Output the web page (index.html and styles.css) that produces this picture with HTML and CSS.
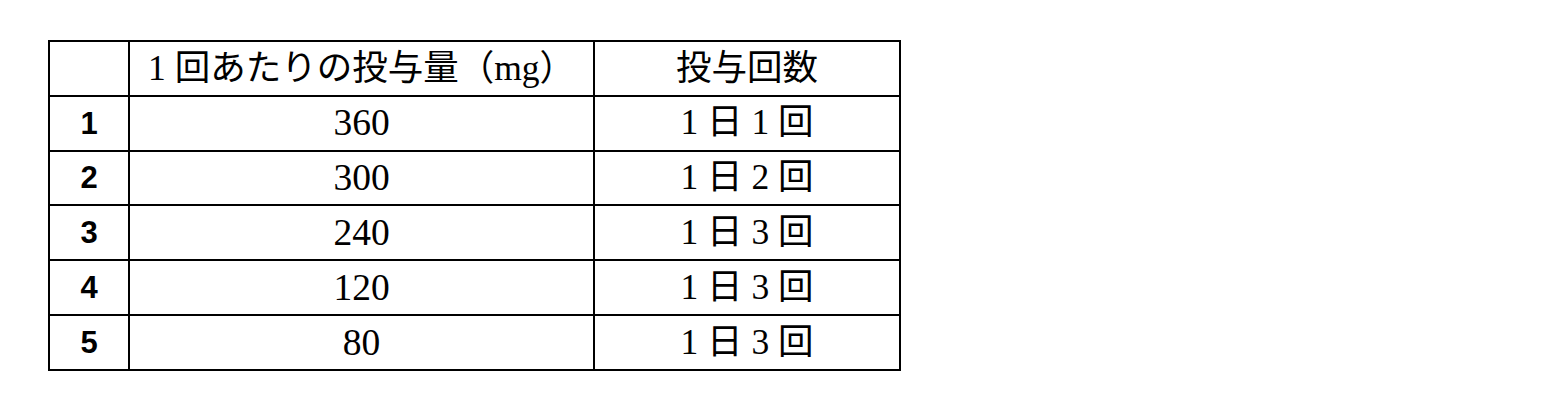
FILE: index.html
```html
<!DOCTYPE html>
<html lang="ja">
<head>
<meta charset="utf-8">
<link rel="stylesheet" href="styles.css">
</head>
<body>
<div class="page">
  <table class="dose">
    <colgroup>
      <col class="c-no">
      <col class="c-amt">
      <col class="c-freq">
    </colgroup>
    <thead>
      <tr>
        <th></th>
        <th>1 回あたりの投与量（mg）</th>
        <th>投与回数</th>
      </tr>
    </thead>
    <tbody>
      <tr><td class="no">1</td><td class="num">360</td><td>1 日 1 回</td></tr>
      <tr><td class="no">2</td><td class="num">300</td><td>1 日 2 回</td></tr>
      <tr><td class="no">3</td><td class="num">240</td><td>1 日 3 回</td></tr>
      <tr><td class="no">4</td><td class="num">120</td><td>1 日 3 回</td></tr>
      <tr><td class="no">5</td><td class="num">80</td><td>1 日 3 回</td></tr>
    </tbody>
  </table>
</div>
</body>
</html>
```
FILE: styles.css
```css
html, body {
  margin: 0;
  padding: 0;
  background: #fff;
}
.page {
  padding: 40px 0 0 48px;
}
.dose {
  border-collapse: collapse;
  table-layout: fixed;
  width: 851px;
  font-family: "Liberation Serif", "Noto Sans CJK JP", serif;
  font-size: 35.5px;
  color: #000;
}
.c-no { width: 80px; }
.c-amt { width: 465px; }
.c-freq { width: 306px; }
.dose th, .dose td {
  border: 2px solid #000;
  height: 52.8px;
  padding: 0;
  text-align: center;
  vertical-align: middle;
  font-weight: normal;
  line-height: 1;
}
.dose td.num {
  font-size: 37.5px;
}
.dose td.no {
  font-family: "Liberation Sans", Arial, sans-serif;
  font-weight: bold;
  font-size: 31px;
}
```
